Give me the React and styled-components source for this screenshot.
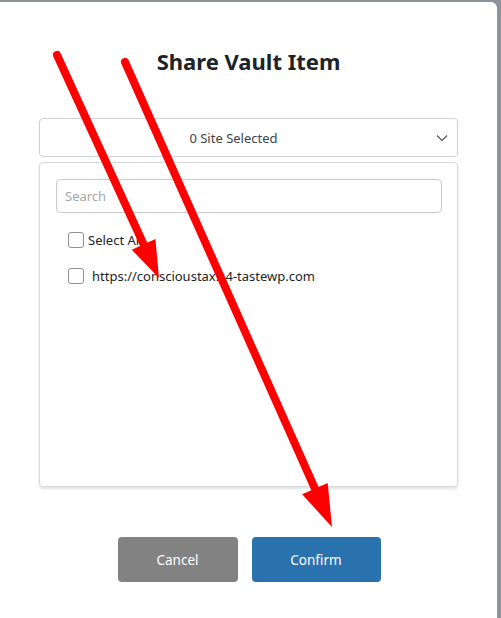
import React from 'react';
import styled, { createGlobalStyle } from 'styled-components';

const GlobalStyle = createGlobalStyle`
  * {
    box-sizing: border-box;
  }
  body {
    margin: 0;
    background-color: #8e929c;
    font-family: 'Noto Sans', 'Open Sans', sans-serif;
  }
`;

const sites = ['https://conscioustax.s4-tastewp.com'];

const Arrow = ({ x1, y1, x2, y2, head = 38, half = 13 }) => {
  const dx = x2 - x1;
  const dy = y2 - y1;
  const len = Math.sqrt(dx * dx + dy * dy);
  const ux = dx / len;
  const uy = dy / len;
  const bx = x2 - ux * head;
  const by = y2 - uy * head;
  const px = -uy;
  const py = ux;
  const points = `${x2},${y2} ${bx + px * half},${by + py * half} ${bx - px * half},${by - py * half}`;

  return (
    <g>
      <line
        x1={x1}
        y1={y1}
        x2={bx + ux * 2}
        y2={by + uy * 2}
        stroke="#ff0000"
        strokeWidth="8"
        strokeLinecap="round"
      />
      <polygon points={points} fill="#ff0000" />
    </g>
  );
};

const App = () => {
  const [query, setQuery] = React.useState('');

  return (
    <Page>
      <GlobalStyle />
      <Modal>
        <Title>Share Vault Item</Title>
        <Select>
          <SelectText>0 Site Selected</SelectText>
          <Chevron viewBox="0 0 12 8">
            <path d="M1 1.5l5 5 5-5" fill="none" stroke="#50575e" strokeWidth="1.2" />
          </Chevron>
        </Select>
        <Panel>
          <Search
            placeholder="Search"
            value={query}
            onChange={e => setQuery(e.target.value)}
          />
          <List>
            <Row>
              <Check type="checkbox" />
              <Label gap={4}>Select All</Label>
            </Row>
            {sites.map(site => (
              <Row key={site}>
                <Check type="checkbox" />
                <Label gap={8}>{site}</Label>
              </Row>
            ))}
          </List>
        </Panel>
        <Footer>
          <Button kind="cancel">Cancel</Button>
          <Button kind="confirm">Confirm</Button>
        </Footer>
      </Modal>
      <Overlay viewBox="0 0 501 618">
        <Arrow x1={57} y1={55} x2={159} y2={278} head={37} half={13} />
        <Arrow x1={125} y1={62} x2={332} y2={527} head={42} half={14} />
      </Overlay>
    </Page>
  );
};

export default App;

const Page = styled.div`
  position: relative;
  width: 501px;
  height: 618px;
  padding-top: 2px;
  overflow: hidden;
  background-color: #8e929c;
`;

const Modal = styled.div`
  width: 497px;
  height: 616px;
  background-color: #ffffff;
  border-top-right-radius: 6px;
  padding: 0 39px;
  display: flex;
  flex-direction: column;
`;

const Title = styled.h2`
  margin: 44px 0 0;
  height: 30px;
  font-size: 22px;
  line-height: 30px;
  font-weight: 700;
  text-align: center;
  color: #1d2327;
`;

const Select = styled.div`
  position: relative;
  margin-top: 42px;
  height: 39px;
  border: 1px solid #cfd1d4;
  border-radius: 4px;
  display: flex;
  align-items: center;
  justify-content: center;
`;

const SelectText = styled.span`
  font-size: 13px;
  color: #3c434a;
  margin-left: -30px;
`;

const Chevron = styled.svg`
  position: absolute;
  right: 9px;
  top: 15px;
  width: 12px;
  height: 8px;
`;

const Panel = styled.div`
  margin-top: 5px;
  height: 325px;
  border: 1px solid #d7d9dc;
  border-radius: 4px;
  padding: 16px 15px 16px 16px;
  box-shadow: 0 2px 3px rgba(0, 0, 0, 0.12);
`;

const Search = styled.input`
  width: 100%;
  height: 34px;
  border: 1px solid #c8cbce;
  border-radius: 4px;
  padding: 0 8px;
  font-family: inherit;
  font-size: 13px;
  color: #2c3338;
  outline: none;

  &::placeholder {
    color: #a2a7ad;
  }
`;

const List = styled.div`
  display: flex;
  flex-direction: column;
  gap: 20px;
  padding: 19px 0 0 12px;
`;

const Row = styled.label`
  display: flex;
  align-items: center;
  height: 16px;
`;

const Check = styled.input`
  appearance: none;
  margin: 0;
  width: 16px;
  height: 16px;
  border: 1px solid #8c8f94;
  border-radius: 3px;
  background-color: #ffffff;
`;

const Label = styled.span`
  margin-left: ${p => p.gap}px;
  font-size: 13px;
  color: #1d2327;
`;

const Footer = styled.div`
  margin-top: 50px;
  padding-left: 1px;
  display: flex;
  justify-content: center;
  gap: 14px;
`;

const Button = styled.button`
  width: ${p => (p.kind === 'confirm' ? 129 : 120)}px;
  height: 45px;
  border: none;
  border-radius: 4px;
  font-family: inherit;
  font-size: 13.5px;
  color: #ffffff;
  background-color: ${p => (p.kind === 'confirm' ? '#2a72ae' : '#828282')};
`;

const Overlay = styled.svg`
  position: absolute;
  left: 0;
  top: 0;
  width: 501px;
  height: 618px;
  pointer-events: none;
`;
